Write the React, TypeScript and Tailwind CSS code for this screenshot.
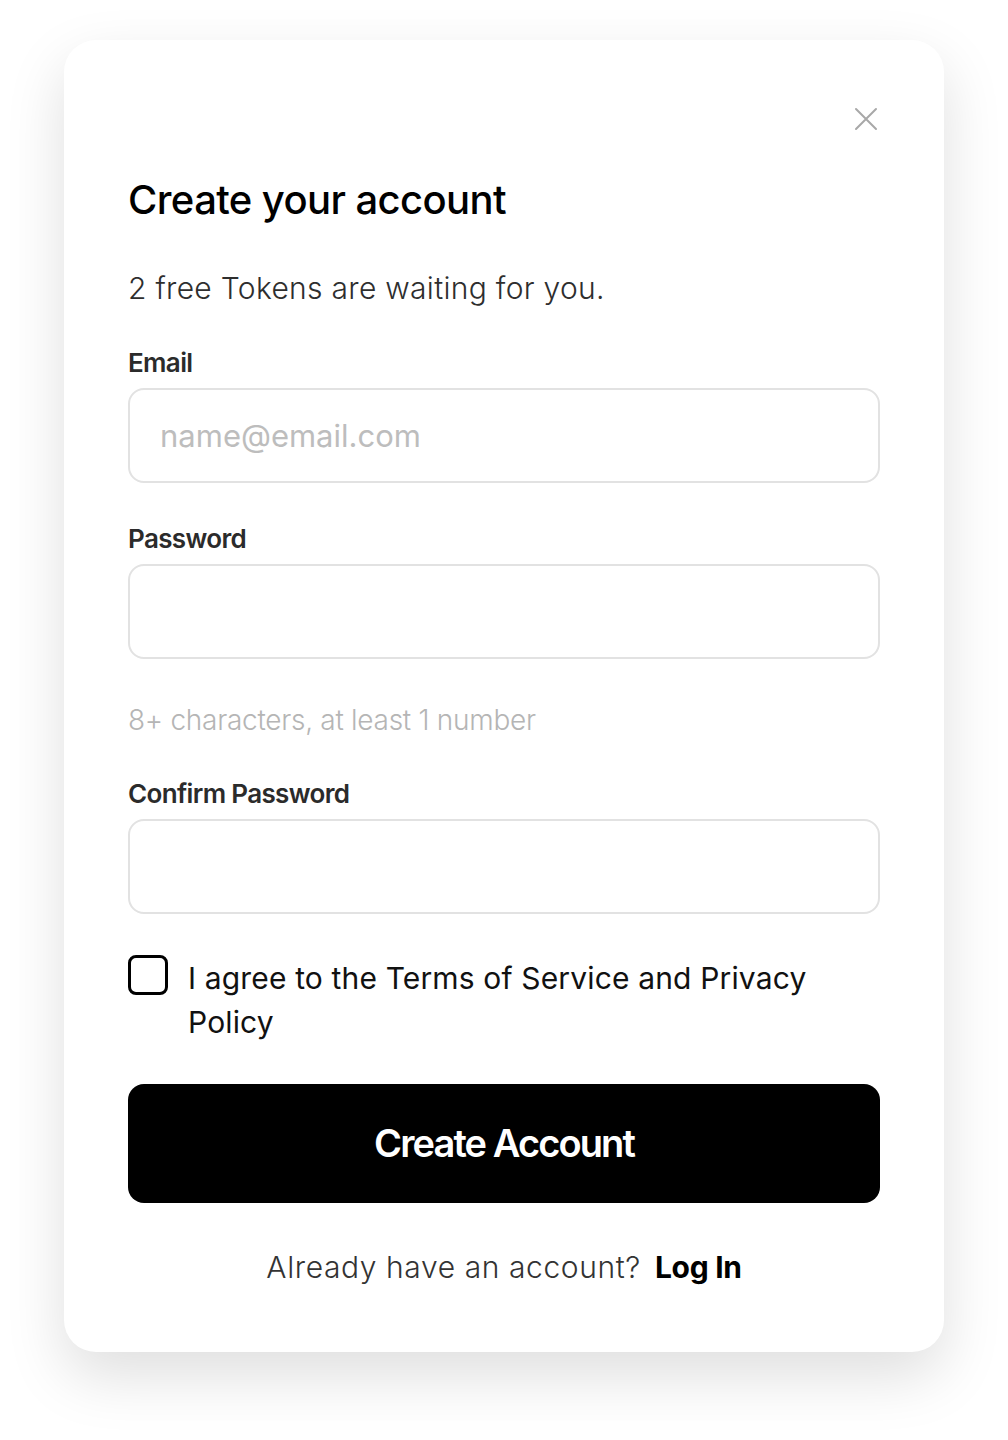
import React, { useState } from 'react';

const font = { fontFamily: 'Inter, "Noto Sans", sans-serif' };

function Field({ label, type, placeholder, className }: { label: string; type: string; placeholder?: string; className?: string }) {
  return (
    <div className={className}>
      <label className="block text-[26px] leading-[32px] font-semibold tracking-[-0.025em] text-[#2b2b2b]">{label}</label>
      <input
        type={type}
        placeholder={placeholder}
        className="mt-[9px] block h-[95px] w-full rounded-[16px] border-2 border-[#e2e2e2] bg-white px-[30px] text-[31px] font-normal text-[#222] outline-none placeholder:text-[#bdbdbd]"
      />
    </div>
  );
}

export default function App() {
  const [agreed, setAgreed] = useState(false);

  return (
    <div className="min-h-[1440px] bg-white pl-16 pt-10" style={font}>
      <div className="w-[880px] rounded-[32px] bg-white px-16 pt-[67px] pb-[65px] shadow-[0_24px_60px_rgba(0,0,0,0.13)]">
        <div className="flex justify-end">
          <button type="button" aria-label="Close" className="mr-[2px] text-[#a8a8a8]">
            <svg width="24" height="24" viewBox="0 0 24 24" fill="none" stroke="currentColor" strokeWidth="2" strokeLinecap="round">
              <path d="M2 2l20 20M22 2L2 22" />
            </svg>
          </button>
        </div>

        <h1 className="mt-[45px] text-[40px] leading-[48px] font-medium tracking-[-0.015em] text-black">Create your account</h1>
        <p className="mt-[46px] text-[30px] leading-[36px] font-light tracking-[0.01em] text-[#2e2e2e]">2 free Tokens are waiting for you.</p>

        <Field className="mt-[41px]" label="Email" type="email" placeholder="name@email.com" />
        <Field className="mt-[40px]" label="Password" type="password" />
        <p className="mt-[45px] text-[28px] leading-[32px] font-light tracking-[-0.01em] text-[#b5b5b5]">8+ characters, at least 1 number</p>
        <Field className="mt-[42px]" label="Confirm Password" type="password" />

        <label className="mt-[42px] flex cursor-pointer items-start gap-[20px]">
          <input type="checkbox" checked={agreed} onChange={e => setAgreed(e.target.checked)} className="sr-only" />
          <span className={`mt-[-1px] h-[40px] w-[40px] shrink-0 rounded-[8px] border-[3px] border-black ${agreed ? 'bg-black' : 'bg-white'}`} />
          <span className="text-[30px] leading-[44px] font-normal tracking-[0.005em] text-[#111]">I agree to the Terms of Service and Privacy Policy</span>
        </label>

        <button type="submit" className="mt-[40px] flex h-[119px] w-full items-center justify-center rounded-[16px] bg-black text-[38px] font-semibold tracking-[-0.05em] text-white">
          Create Account
        </button>

        <p className="mt-[44px] text-center text-[30px] leading-[40px] tracking-[0.02em]">
          <span className="font-light text-[#333]">Already have an account?</span>
          <span className="ml-[14px] font-bold tracking-[-0.01em] text-black">Log In</span>
        </p>
      </div>
    </div>
  );
}
